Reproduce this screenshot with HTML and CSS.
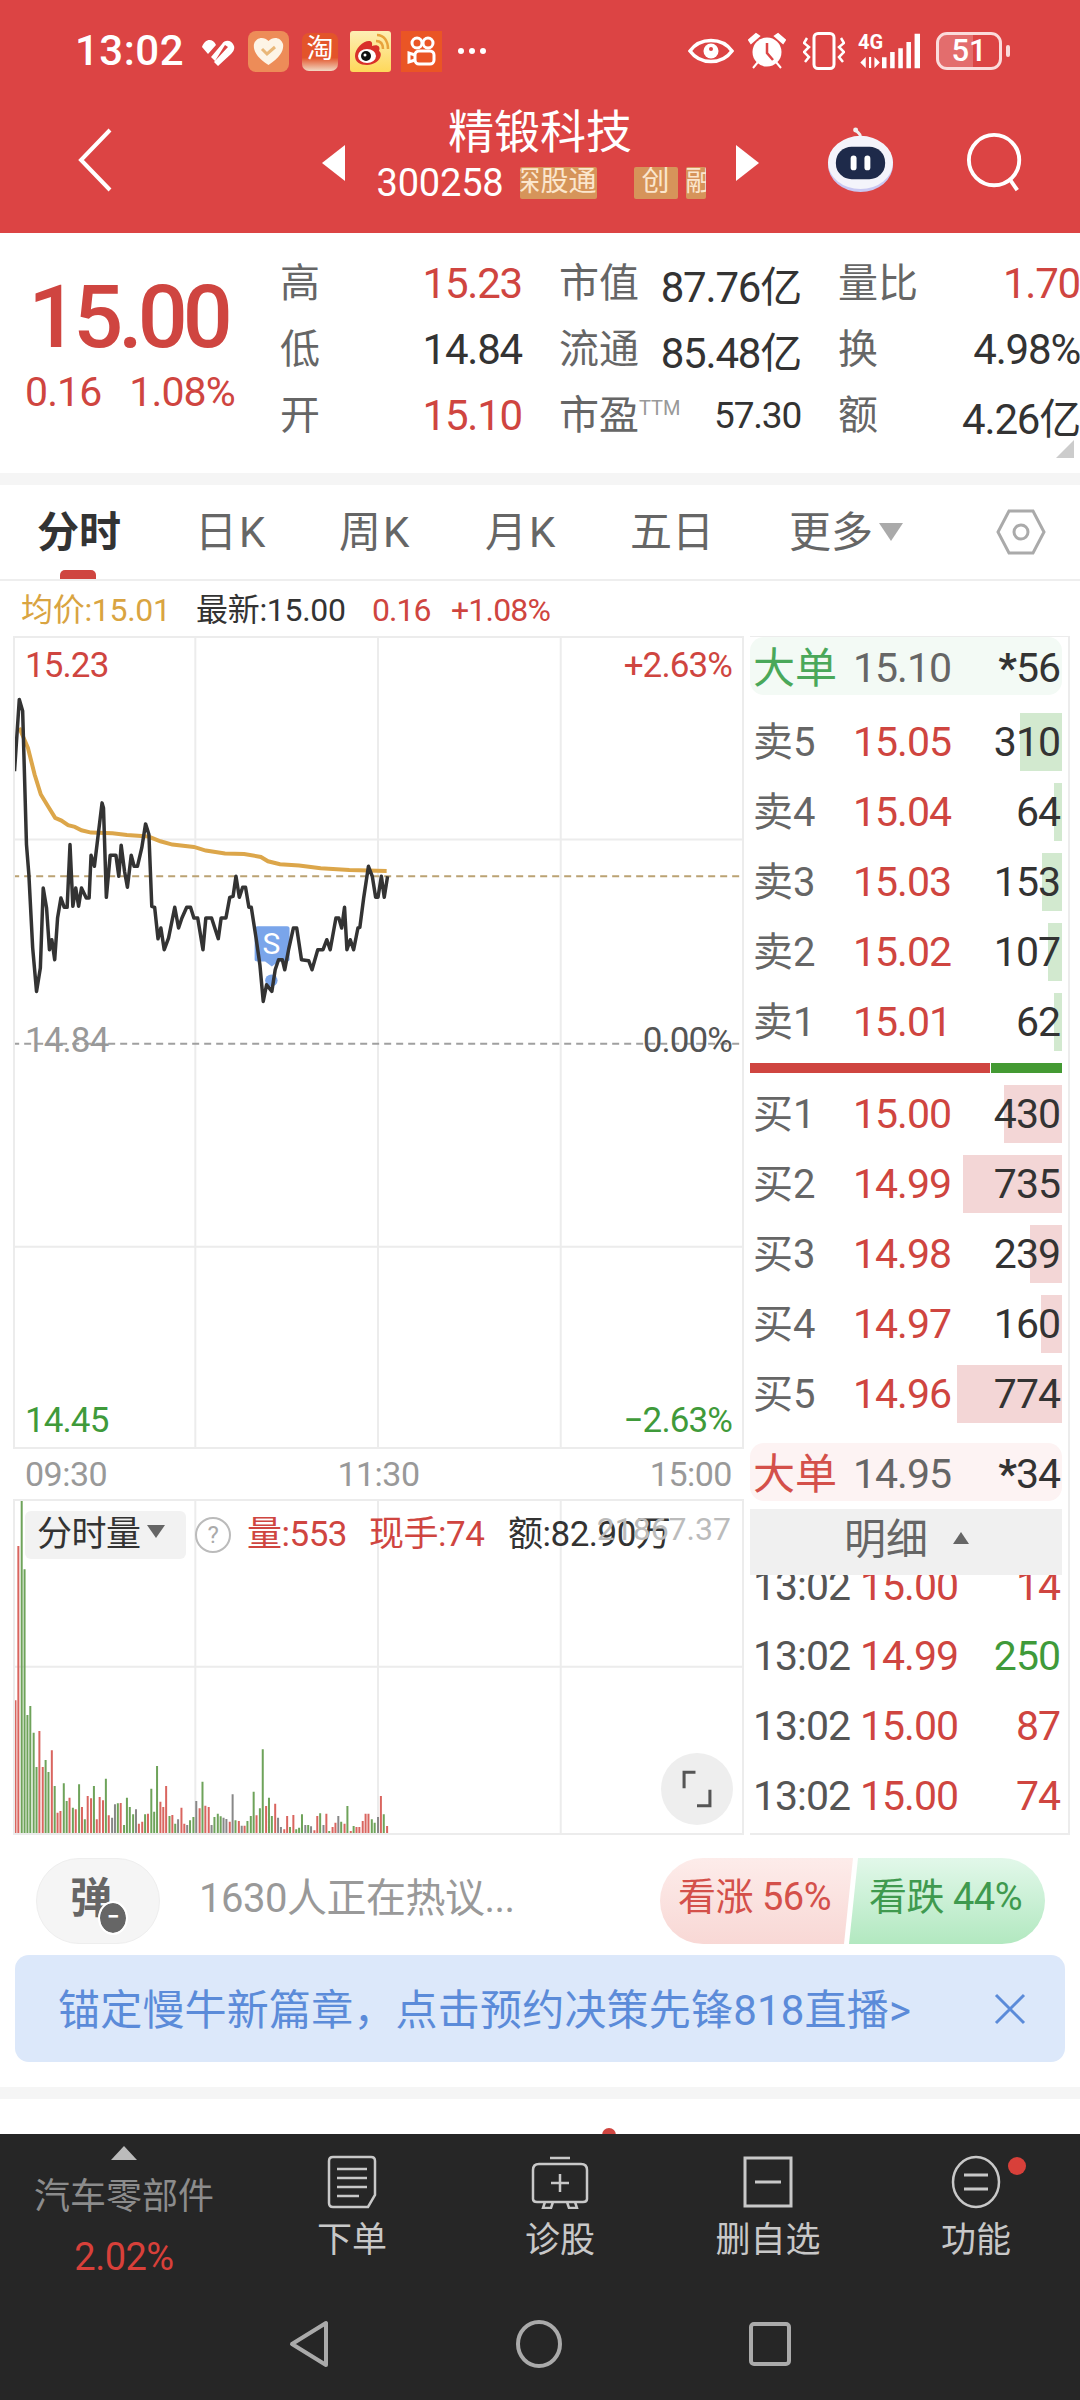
FILE: index.html
```html
<!DOCTYPE html>
<html lang="en">
<head>
  <meta charset="UTF-8">
  <title>精锻科技</title>
  <link rel="stylesheet" href="styles.css">
</head>
<body>
<header class="top">
  <div class="status">
    <span class="clock">13:02</span>
    <svg class="ic-pulse" viewBox="0 0 36 30"><path d="M2 10 C5 1 13 1 16 8 L8 17 Z M11 20 L22 7 C25 2 32 3 34 9 C35 12 33 15 31 17 L18 29 L14 25 L28 10 L25 8 L15 24 Z" fill="#fff"/></svg>
    <svg class="ic-app" viewBox="0 0 41 41"><rect width="41" height="41" rx="8" fill="#ed8c58"/><path d="M20.500 34 C8 26 5 19 6 13 C8 6 16 5 20.500 10 C25 5 33 6 35 13 C36 19 33 26 20.500 34Z" fill="#fdf4e6"/><path d="M14 18 L19 23 L27 16" fill="none" stroke="#e9b778" stroke-width="3"/></svg>
    <span class="ic-taobao">淘</span>
    <svg class="ic-app ic-weibo" viewBox="0 0 41 41"><defs><linearGradient id="wb" x1="0" y1="0" x2="0" y2="1"><stop offset="0" stop-color="#fdeeb5"/><stop offset="1" stop-color="#fed85a"/></linearGradient></defs><rect width="41" height="41" rx="3" fill="url(#wb)"/><path d="M5 25 C5 17 14 9 20 10 C23 11 22 14 22 15 C27 13 31 15 29 20 C33 22 31 33 17 34 C10 34 5 31 5 25Z" fill="#d9302a"/><ellipse cx="17" cy="25" rx="9" ry="7" fill="#fff"/><circle cx="16" cy="25" r="5" fill="#111"/><circle cx="15" cy="24" r="1.500" fill="#fff"/><path d="M26 10 C31 10 33 13 33 18 M27 4 C34 4 38 10 38 18" fill="none" stroke="#e8a23c" stroke-width="2.500"/></svg>
    <svg class="ic-app ic-kuai" viewBox="0 0 41 41"><rect width="41" height="41" fill="#ea5525"/><g fill="none" stroke="#fff" stroke-width="3"><circle cx="16" cy="12" r="5"/><circle cx="27" cy="12" r="5"/><rect x="14" y="20" width="19" height="13" rx="4"/><path d="M14 24 L8 22 V31 L14 29"/></g></svg>
    <span class="dots"><i></i><i></i><i></i></span>
    <span class="status-right">
      <svg class="ic-eye" viewBox="0 0 46 30"><path d="M2 15 C12 1 34 1 44 15 C34 29 12 29 2 15Z" fill="none" stroke="#fff" stroke-width="3.500"/><circle cx="23" cy="15" r="7.500" fill="#fff"/><circle cx="23" cy="13" r="2" fill="#dc4444"/></svg>
      <svg class="ic-alarm" viewBox="0 0 38 38"><circle cx="19" cy="20" r="14.500" fill="#fff"/><path d="M19 11 V21 L25 28" fill="none" stroke="#dc4444" stroke-width="2.500"/><path d="M1 8 L8 2 L11 4 L3 11Z M37 8 L30 2 L27 4 L35 11Z M5 36 L10 30 M33 36 L28 30" fill="#fff" stroke="#fff" stroke-width="2"/></svg>
      <svg class="ic-vib" viewBox="0 0 42 38"><rect x="11" y="1.500" width="20" height="35" rx="4" fill="none" stroke="#fff" stroke-width="3"/><path d="M4 6 L1 11 L6 15 L1 20 L6 25 L2 30 M38 6 L41 11 L36 15 L41 20 L36 25 L40 30" fill="none" stroke="#fff" stroke-width="2.500"/></svg>
      <span class="sig">
        <span class="sig-4g">4G<svg viewBox="0 0 20 12"><path d="M2 6 L7 1 V11 Z M10 1 H12 V11 H10 Z M15 1 L20 6 L15 11 Z" fill="#fff"/></svg></span>
        <svg class="sig-bars" viewBox="0 0 42 38"><path d="M0 26 H5 V38 H0Z M9 20 H14 V38 H9Z M18 16 H23 V38 H18Z M27 9 H32 V38 H27Z M36 0 H42 V38 H36Z" fill="#fff"/></svg>
      </span>
      <span class="batt"><span class="batt-level"></span><span class="batt-num">51</span></span><span class="batt-tip"></span>
    </span>
  </div>
  <div class="nav">
    <svg class="ic-back" viewBox="0 0 36 64"><path d="M33 2 L4 32 L33 62" fill="none" stroke="#fff" stroke-width="4"/></svg>
    <div class="stock">
      <span class="tri-left"></span>
      <div class="stock-name">
        <div class="stock-title">精锻科技</div>
        <div class="stock-sub">
          <span class="code">300258</span>
          <span class="tag tag-clip-l"><b>深股通</b></span>
          <span class="tag tag-chuang">创</span>
          <span class="tag tag-clip-r"><b>融</b></span>
        </div>
      </div>
      <span class="tri-right"></span>
    </div>
    <svg class="ic-robot" viewBox="0 0 72 66"><path d="M36 10 C36 6 32 6 31 2" fill="none" stroke="#f0f0f0" stroke-width="3"/><circle cx="31" cy="3" r="2.500" fill="#f0f0f0"/><ellipse cx="36" cy="38" rx="33" ry="28" fill="#c9c8f2"/><ellipse cx="36" cy="36" rx="33" ry="27" fill="#f4f4fb"/><rect x="11" y="20" width="50" height="33" rx="16" fill="#1e2a4a"/><rect x="26" y="29" width="6" height="15" rx="3" fill="#fff"/><rect x="40" y="29" width="6" height="15" rx="3" fill="#fff"/></svg>
    <svg class="ic-search" viewBox="0 0 62 62"><circle cx="29" cy="29" r="26" fill="none" stroke="#fff" stroke-width="4"/><path d="M46 50 L53 60" stroke="#fff" stroke-width="4"/></svg>
  </div>
</header>

<section class="quote">
  <div class="quote-main">
    <div class="price">15.00</div>
    <div class="change"><span>0.16</span><span>1.08%</span></div>
  </div>
  <div class="quote-grid">
    <div class="cell"><span>高</span><b class="red">15.23</b></div>
    <div class="cell"><span>市值</span><b>87.76亿</b></div>
    <div class="cell"><span>量比</span><b class="red">1.70</b></div>
    <div class="cell"><span>低</span><b>14.84</b></div>
    <div class="cell"><span>流通</span><b>85.48亿</b></div>
    <div class="cell"><span>换</span><b>4.98%</b></div>
    <div class="cell"><span>开</span><b class="red">15.10</b></div>
    <div class="cell"><span>市盈<sup>TTM</sup></span><b class="small">57.30</b></div>
    <div class="cell"><span>额</span><b>4.26亿</b></div>
  </div>
  <span class="corner"></span>
</section>
<div class="strip"></div>

<nav class="tabs">
  <a class="tab active">分时</a>
  <a class="tab t2">日K</a>
  <a class="tab t3">周K</a>
  <a class="tab t4">月K</a>
  <a class="tab t5">五日</a>
  <a class="tab t6">更多<i class="down"></i></a>
  <svg class="ic-hex" viewBox="0 0 50 46"><path d="M13 2 H37 L48 23 L37 44 H13 L2 23Z" fill="none" stroke="#aaa" stroke-width="3"/><circle cx="25" cy="23" r="7" fill="none" stroke="#aaa" stroke-width="3"/></svg>
</nav>

<div class="legend">
  <span class="gold">均价:15.01</span>
  <span class="l2">最新:15.00</span>
  <span class="red l3">0.16</span>
  <span class="red l4">+1.08%</span>
</div>

<main class="market">
  <div class="charts">
    <div class="price-chart">
      <svg viewBox="31 21 1520 2424" preserveAspectRatio="none">
        <g class="grid">
          <path d="M408 0 V2500 M790 0 V2500 M1172 0 V2500 M0 625 H1600 M0 1845 H1600"/>
        </g>
        <path class="dash-gold" d="M0 735 H1600"/>
        <path class="dash-gray" d="M0 1237 H1600"/>
        <path class="avg" d="M40 290 L58 350 L72 430 L85 490 L100 525 L115 560 L128 568 L142 582 L156 587 L170 597 L190 604 L235 606 L265 611 L310 616 L335 630 L360 640 L405 647 L430 658 L470 667 L510 668 L545 677 L560 690 L585 699 L625 703 L670 711 L730 716 L808 719"/>
        <path class="marker" d="M538 885 H600 Q605 885 605 890 V985 Q605 990 600 990 H582 L568 1005 L554 990 H538 Q532 990 532 985 V890 Q532 885 538 885Z"/>
        <ellipse class="marker" cx="567" cy="1047" rx="13" ry="18"/>
        <path class="line" d="M30 420 L40 205 L47 240 L55 640 L60 730 L68 950 L76 1080 L84 1010 L90 770 L97 830 L103 955 L108 925 L114 985 L120 860 L127 800 L134 828 L140 828 L146 640 L152 825 L158 770 L164 825 L170 770 L180 800 L186 800 L190 672 L197 705 L205 610 L213 515 L216 530 L222 798 L230 672 L242 672 L248 735 L253 642 L260 720 L266 768 L274 672 L280 705 L287 705 L296 650 L304 578 L311 610 L317 825 L323 828 L330 922 L336 890 L343 955 L352 920 L365 828 L373 890 L380 860 L390 828 L398 828 L405 860 L413 860 L424 955 L430 860 L442 860 L456 922 L462 860 L472 860 L480 798 L487 795 L493 735 L500 798 L507 768 L513 768 L520 828 L525 828 L535 920 L543 1000 L550 1110 L557 1060 L568 1080 L575 1015 L582 985 L590 985 L595 1015 L603 955 L613 890 L620 890 L630 985 L645 988 L652 1015 L664 955 L675 955 L683 925 L690 955 L702 860 L708 860 L714 890 L720 828 L725 955 L732 925 L739 955 L748 890 L752 888 L760 800 L770 705 L778 735 L785 798 L790 798 L797 735 L803 798 L810 735"/>
      </svg>
      <span class="mark-s">S</span>
      <span class="ax ax-tl red">15.23</span>
      <span class="ax ax-tr red">+2.63%</span>
      <span class="ax ax-ml">14.84</span>
      <span class="ax ax-mr">0.00%</span>
      <span class="ax ax-bl green">14.45</span>
      <span class="ax ax-br green">−2.63%</span>
    </div>
    <div class="times"><span>09:30</span><span>11:30</span><span>15:00</span></div>
    <div class="vol-chart">
      <svg viewBox="31 300 1520 996" preserveAspectRatio="none">
        <g class="grid">
          <path d="M408 0 V1400 M790 0 V1400 M1172 0 V1400 M0 797 H1600"/>
        </g>
        <path class="bar-r" d="M32 898V1300M38 435V1300M82 990V1300M89 1098V1300M108 1048V1300M120 1235V1300M126 1230V1300M145 1190V1300M158 1225V1300M171 1218V1300M183 1185V1300M190 1192V1300M202 1255V1300M208 1188V1300M215 1198V1300M227 1243V1300M252 1206V1300M290 1268V1300M297 1262V1300M309 1238V1300M335 1202V1300M341 1218V1300M347 1155V1300M360 1242V1300M379 1220V1300M385 1268V1300M417 1222V1300M429 1214V1300M436 1218V1300M480 1262V1300M499 1260V1300M511 1274V1300M536 1243V1300M556 1215V1300M575 1208V1300M594 1285V1300M600 1245V1300M613 1242V1300M657 1288V1300M663 1245V1300M682 1238V1300M695 1278V1300M701 1265V1300M720 1268V1300M733 1290V1300M745 1278V1300M751 1278V1300M758 1260V1300M764 1238V1300M770 1238V1300M796 1185V1300M809 1275V1300"/>
        <path class="bar-g" d="M45 295V1300M51 505V1300M57 942V1300M63 915V1300M70 995V1300M76 1098V1300M95 1077V1300M101 1113V1300M114 1155V1300M133 1147V1300M139 1200V1300M152 1220V1300M165 1150V1300M177 1255V1300M196 1155V1300M221 1133V1300M246 1207V1300M259 1272V1300M265 1190V1300M271 1218V1300M278 1240V1300M303 1240V1300M316 1163V1300M322 1232V1300M328 1095V1300M354 1245V1300M366 1268V1300M397 1258V1300M404 1248V1300M423 1142V1300M448 1248V1300M455 1238V1300M461 1246V1300M492 1258V1300M517 1260V1300M524 1245V1300M530 1172V1300M543 1222V1300M549 1045V1300M562 1190V1300M568 1245V1300M606 1278V1300M619 1285V1300M625 1280V1300M631 1240V1300M644 1272V1300M669 1237V1300M688 1290V1300M713 1262V1300M726 1215V1300M739 1275V1300M777 1255V1300M783 1265V1300M802 1240V1300"/>
        <path class="bar-n" d="M234 1250V1300M240 1210V1300M284 1225V1300M372 1255V1300M391 1272V1300M410 1200V1300M442 1272V1300M467 1250V1300M473 1254V1300M486 1180V1300M505 1274V1300M581 1250V1300M587 1278V1300M638 1272V1300M650 1276V1300M676 1272V1300M707 1245V1300M790 1248V1300"/>
      </svg>
      <div class="vol-head">
        <span class="vol-chip">分时量<i class="down dark"></i></span>
        <span class="help">?</span>
        <span class="red v1">量:553</span>
        <span class="red v2">现手:74</span>
        <span class="v3">额:82.90万</span>
      </div>
      <span class="vol-max">21867.37</span>
      <span class="fullscreen">
        <svg viewBox="0 0 40 50"><path d="M18 3 H3 V24 M37 26 V47 H20" fill="none" stroke="#555" stroke-width="4"/></svg>
      </span>
    </div>
  </div>

  <aside class="book">
    <div class="big big-buy"><span class="lab">大单</span><span class="gray">15.10</span><span class="qty"><em>*</em>56</span></div>
    <div class="asks">
      <div class="row"><i class="vol vol-g" style="width:42px"></i><span class="lab">卖5</span><span class="red">15.05</span><span class="qty">310</span></div>
      <div class="row"><i class="vol vol-g" style="width:8px"></i><span class="lab">卖4</span><span class="red">15.04</span><span class="qty">64</span></div>
      <div class="row"><i class="vol vol-g" style="width:20px"></i><span class="lab">卖3</span><span class="red">15.03</span><span class="qty">153</span></div>
      <div class="row"><i class="vol vol-g" style="width:14px"></i><span class="lab">卖2</span><span class="red">15.02</span><span class="qty">107</span></div>
      <div class="row"><i class="vol vol-g" style="width:8px"></i><span class="lab">卖1</span><span class="red">15.01</span><span class="qty">62</span></div>
    </div>
    <div class="ratio"><i class="ratio-r"></i><i class="ratio-g"></i></div>
    <div class="bids">
      <div class="row"><i class="vol vol-r" style="width:58px"></i><span class="lab">买1</span><span class="red">15.00</span><span class="qty">430</span></div>
      <div class="row"><i class="vol vol-r" style="width:99px"></i><span class="lab">买2</span><span class="red">14.99</span><span class="qty">735</span></div>
      <div class="row"><i class="vol vol-r" style="width:32px"></i><span class="lab">买3</span><span class="red">14.98</span><span class="qty">239</span></div>
      <div class="row"><i class="vol vol-r" style="width:21px"></i><span class="lab">买4</span><span class="red">14.97</span><span class="qty">160</span></div>
      <div class="row"><i class="vol vol-r" style="width:105px"></i><span class="lab">买5</span><span class="red">14.96</span><span class="qty">774</span></div>
    </div>
    <div class="big big-sell"><span class="lab">大单</span><span class="gray">14.95</span><span class="qty"><em>*</em>34</span></div>
    <div class="detail-head">明细<i class="up"></i></div>
    <div class="ticks">
      <div class="tick"><span>13:02</span><span class="red">15.00</span><span class="red qty">14</span></div>
      <div class="tick"><span>13:02</span><span class="red">14.99</span><span class="green qty">250</span></div>
      <div class="tick"><span>13:02</span><span class="red">15.00</span><span class="red qty">87</span></div>
      <div class="tick"><span>13:02</span><span class="red">15.00</span><span class="red qty">74</span></div>
    </div>
  </aside>
</main>

<div class="talk">
  <span class="danmu">弹<i>−</i></span>
  <span class="talk-text">1630人正在热议...</span>
  <div class="vote">
    <span class="vote-up">看涨 56%</span>
    <span class="vote-down">看跌 44%</span>
  </div>
</div>

<div class="notice">
  <span>锚定慢牛新篇章，点击预约决策先锋818直播&gt;</span>
  <svg viewBox="0 0 32 32"><path d="M2 2 L30 30 M30 2 L2 30" stroke="#5b8bd9" stroke-width="3"/></svg>
</div>

<div class="strip strip-low"></div>
<div class="gap"><i class="gap-dot"></i></div>

<footer class="dock">
  <div class="dock-top">
    <div class="sector">
      <i class="sector-tri"></i>
      <div class="sector-name">汽车零部件</div>
      <div class="sector-pct">2.02%</div>
    </div>
    <div class="act">
      <svg viewBox="0 0 50 54"><path d="M6 2 H44 Q48 2 48 6 V40 L41 52 H6 Q2 52 2 48 V6 Q2 2 6 2Z M10 14 H40 M10 23 H40 M10 32 H40 M10 41 H32" fill="none" stroke="#c8c8c8" stroke-width="2.500"/></svg>
      <span>下单</span>
    </div>
    <div class="act">
      <svg viewBox="0 0 58 54"><path d="M19 3 H39 M8 9 H50 Q56 9 56 15 V44 Q56 47 52 47 H6 Q2 47 2 44 V15 Q2 9 8 9Z M29 19 V37 M20 28 H38 M14 47 L12 53 H20 L22 47 M36 47 L38 53 H46 L44 47" fill="none" stroke="#c8c8c8" stroke-width="2.500"/></svg>
      <span>诊股</span>
    </div>
    <div class="act">
      <svg viewBox="0 0 50 54"><rect x="2" y="3" width="46" height="48" fill="none" stroke="#c8c8c8" stroke-width="3"/><path d="M12 27 H38" stroke="#c8c8c8" stroke-width="3"/></svg>
      <span>删自选</span>
    </div>
    <div class="act act-dot">
      <svg viewBox="0 0 50 54"><ellipse cx="25" cy="27" rx="23" ry="25" fill="none" stroke="#c8c8c8" stroke-width="2.500"/><path d="M13 20 H37 M13 34 H37" stroke="#c8c8c8" stroke-width="3"/></svg>
      <span>功能</span>
      <i class="red-dot"></i>
    </div>
  </div>
  <div class="sysnav">
    <svg class="sn-back" viewBox="0 0 40 48"><path d="M37 3 V45 L3 24Z" fill="none" stroke="#aaa" stroke-width="4" stroke-linejoin="round"/></svg>
    <svg class="sn-home" viewBox="0 0 46 48"><ellipse cx="23" cy="24" rx="21" ry="22" fill="none" stroke="#aaa" stroke-width="4"/></svg>
    <svg class="sn-recent" viewBox="0 0 42 44"><rect x="2" y="2" width="38" height="40" rx="3" fill="none" stroke="#aaa" stroke-width="4"/></svg>
  </div>
</footer>
</body>
</html>
```

FILE: styles.css
```css
* {
  box-sizing: border-box;
}
body {
  margin: 0;
  width: 1080px;
  height: 2400px;
  overflow: hidden;
  background: #fff;
  color: #333;
  font-family: Roboto, "Noto Sans CJK SC", sans-serif;
}
i {
  font-style: normal;
}
svg {
  display: block;
}
.red { color: #cf4540; }
.green { color: #3f9a3a; }
.gold { color: #d9a441; }
.gray { color: #666; }

/* header */
.top {
  height: 233px;
  background: #dc4444;
  color: #fff;
}
.status {
  height: 100px;
  padding: 30px 0 0 75px;
  display: flex;
  align-items: flex-start;
  position: relative;
}
.clock {
  width: 111px;
  font-size: 42px;
  line-height: 42px;
  font-weight: 500;
  letter-spacing: 0.5px;
}
.ic-pulse {
  width: 36px;
  height: 30px;
  margin: 7px 0 0 14px;
}
.ic-app {
  width: 41px;
  height: 41px;
  margin: 1px 0 0 12px;
}
.ic-taobao {
  width: 36px;
  height: 38px;
  margin: 3px 0 0 13px;
  border-radius: 7px;
  background: linear-gradient(#e3542a 65%, #f1d9c3);
  font-size: 27px;
  line-height: 32px;
  text-align: center;
}
.ic-weibo { margin-left: 12px; }
.ic-kuai { margin-left: 10px; }
.dots {
  display: flex;
  gap: 5px;
  margin: 18px 0 0 16px;
}
.dots i {
  width: 6px;
  height: 6px;
  border-radius: 50%;
  background: #fff;
}
.status-right {
  margin-left: 202px;
  display: flex;
  align-items: center;
  height: 42px;
}
.ic-eye { width: 46px; height: 30px; }
.ic-alarm { width: 38px; height: 38px; margin-left: 14px; }
.ic-vib { width: 42px; height: 38px; margin-left: 17px; }
.sig {
  display: flex;
  margin-left: 13px;
  width: 62px;
  height: 38px;
}
.sig-4g {
  width: 24px;
  font-size: 20px;
  line-height: 20px;
  font-weight: 700;
}
.sig-4g svg {
  width: 22px;
  height: 13px;
  margin-top: 4px;
}
.sig-bars {
  width: 38px;
  height: 38px;
}
.batt {
  position: relative;
  width: 66px;
  height: 38px;
  margin-left: 16px;
  border: 3px solid #fbdcdc;
  border-radius: 11px;
  overflow: hidden;
  text-align: center;
  font-size: 31px;
  line-height: 32px;
  font-weight: 500;
}
.batt-level {
  position: absolute;
  left: 0;
  top: 0;
  bottom: 0;
  width: 34px;
  background: rgba(255, 255, 255, 0.22);
}
.batt-num { position: relative; }
.batt-tip {
  width: 4px;
  height: 12px;
  margin-left: 4px;
  border-radius: 2px;
  background: #fbdcdc;
}
.nav {
  height: 133px;
  position: relative;
  display: flex;
}
.ic-back {
  position: absolute;
  left: 77px;
  top: 28px;
  width: 36px;
  height: 64px;
}
.stock {
  width: 100%;
  display: flex;
  justify-content: center;
}
.tri-left, .tri-right {
  width: 0;
  height: 0;
  margin-top: 45px;
  border-top: 18px solid transparent;
  border-bottom: 18px solid transparent;
}
.tri-left { border-right: 23px solid #fff; }
.tri-right { border-left: 23px solid #fff; }
.stock-name {
  width: 391px;
  text-align: center;
}
.stock-title {
  font-size: 46px;
  line-height: 62px;
  margin-top: 1px;
}
.stock-sub {
  display: flex;
  align-items: center;
  margin: 4px 0 0 32px;
}
.code {
  width: 143px;
  text-align: left;
  font-size: 38px;
  line-height: 32px;
  letter-spacing: -0.2px;
}
.tag {
  display: flex;
  height: 32px;
  overflow: hidden;
  background: #d6945a;
  color: #fbe6cd;
  font-size: 28px;
  line-height: 30px;
  border-radius: 2px;
}
.tag b { font-weight: 400; flex: none; }
.tag-clip-l { width: 77px; justify-content: flex-end; }
.tag-chuang { width: 44px; margin-left: 37px; justify-content: center; }
.tag-clip-r { width: 20px; margin-left: 8px; }
.ic-robot {
  position: absolute;
  left: 825px;
  top: 27px;
  width: 71px;
  height: 65px;
}
.ic-search {
  position: absolute;
  left: 966px;
  top: 32px;
  width: 60px;
  height: 60px;
}

/* quote */
.quote {
  height: 240px;
  position: relative;
  display: flex;
}
.quote-main {
  width: 280px;
  text-align: center;
}
.quote-main .price {
  margin: 34px 0 0 -24px;
  font-size: 88px;
  line-height: 100px;
  font-weight: 500;
  letter-spacing: -5px;
  color: #cf4540;
}
.change {
  display: flex;
  gap: 28px;
  margin: 0 0 0 25px;
  font-size: 41px;
  line-height: 50px;
  letter-spacing: -0.9px;
  color: #cf4540;
}
.quote-grid {
  width: 800px;
  padding-top: 17px;
  display: grid;
  grid-template-columns: 242px 242px 242px;
  grid-auto-rows: 66px;
  column-gap: 37px;
}
.cell {
  display: flex;
  justify-content: space-between;
  align-items: center;
  font-size: 40px;
  color: #666;
}
.cell span {
  position: relative;
  top: -3px;
}
.cell b {
  font-weight: 400;
  font-size: 42px;
  letter-spacing: -1.2px;
  color: #333;
}
.cell b.red { color: #cf4540; }
.cell b.small { font-size: 37px; }
.cell sup {
  font-size: 20px;
  vertical-align: 14px;
  line-height: 0;
  color: #999;
}
.corner {
  position: absolute;
  right: 6px;
  bottom: 15px;
  width: 0;
  height: 0;
  border-left: 18px solid transparent;
  border-bottom: 18px solid #ccc;
}
.strip {
  height: 12px;
  background: #f5f5f5;
}

/* tabs */
.tabs {
  height: 96px;
  position: relative;
  border-bottom: 2px solid #eee;
  font-size: 42px;
  color: #666;
}
.tab {
  position: absolute;
  top: 24px;
  line-height: 48px;
}
.tab.active {
  left: 37px;
  font-weight: 700;
  color: #333;
}
.tab.active::after {
  content: "";
  position: absolute;
  left: 23px;
  top: 61px;
  width: 36px;
  height: 9px;
  border-radius: 5px 5px 0 0;
  background: #cf4540;
}
.t2, .t3, .t4 { letter-spacing: 2px; }
.t2 { left: 195px; }
.t3 { left: 339px; }
.t4 { left: 485px; }
.t5 { left: 630px; }
.t6 { left: 789px; }
.down {
  display: inline-block;
  width: 0;
  height: 0;
  margin-left: 6px;
  vertical-align: 6px;
  border-left: 12px solid transparent;
  border-right: 12px solid transparent;
  border-top: 18px solid #aaa;
}
.ic-hex {
  position: absolute;
  left: 996px;
  top: 24px;
  width: 50px;
  height: 46px;
}

/* legend */
.legend {
  height: 55px;
  position: relative;
  font-size: 32px;
  line-height: 58px;
  letter-spacing: -0.3px;
}
.legend span { position: absolute; }
.legend .gold { left: 21px; }
.l2 { left: 196px; }
.l3 { left: 372px; letter-spacing: -1px; }
.l4 { left: 451px; letter-spacing: -0.8px; }

/* main area */
.market {
  display: flex;
  height: 1199px;
}
.charts {
  width: 731px;
  margin-left: 13px;
}
.grid path {
  fill: none;
  stroke: #ececec;
  stroke-width: 2;
  vector-effect: non-scaling-stroke;
}
.price-chart {
  position: relative;
  height: 813px;
  border: 2px solid #ececec;
}
.price-chart svg, .vol-chart svg {
  width: 100%;
  height: 100%;
}
.dash-gold, .dash-gray, .avg, .line {
  fill: none;
  vector-effect: non-scaling-stroke;
}
.dash-gold {
  stroke: #bba273;
  stroke-width: 2;
  stroke-dasharray: 7 5;
}
.dash-gray {
  stroke: #a0a0a0;
  stroke-width: 2;
  stroke-dasharray: 7 5;
}
.avg {
  stroke: #dca64a;
  stroke-width: 4;
}
.line {
  stroke: #333;
  stroke-width: 3.5;
  stroke-linejoin: round;
}
.marker {
  fill: #7aa5ea;
}
.mark-s {
  position: absolute;
  left: 239px;
  top: 288px;
  width: 35px;
  text-align: center;
  font-size: 30px;
  line-height: 36px;
  color: #fff;
}
.ax {
  position: absolute;
  font-size: 35px;
  line-height: 40px;
  letter-spacing: -0.9px;
}
.ax-tl { left: 10px; top: 8px; }
.ax-tr { right: 10px; top: 8px; }
.ax-ml { left: 10px; top: 383px; color: #999; }
.ax-mr { right: 10px; top: 383px; color: #555; }
.ax-bl { left: 10px; top: 763px; }
.ax-br { right: 10px; top: 763px; }
.times {
  height: 50px;
  padding: 0 12px;
  display: flex;
  justify-content: space-between;
  font-size: 34px;
  line-height: 50px;
  letter-spacing: -0.5px;
  color: #999;
}
.vol-chart {
  position: relative;
  height: 336px;
  border: 2px solid #ececec;
  border-right-width: 2px;
}
.bar-r, .bar-g, .bar-n {
  fill: none;
  stroke-width: 2;
  vector-effect: non-scaling-stroke;
}
.bar-r { stroke: #d9655f; }
.bar-g { stroke: #6ea35a; }
.bar-n { stroke: #888; }
.vol-head {
  position: absolute;
  left: 0;
  top: 10px;
  width: 100%;
  height: 48px;
  font-size: 35px;
  line-height: 48px;
  letter-spacing: -0.5px;
}
.vol-head > span { position: absolute; top: 0; }
.vol-chip {
  left: 10px;
  width: 161px;
  height: 48px;
  padding-left: 12px;
  background: #f2f2f2;
  border-radius: 6px;
  font-size: 35px;
}
.down.dark {
  border-left-width: 9px;
  border-right-width: 9px;
  border-top: 13px solid #666;
  margin-left: 6px;
  vertical-align: 8px;
}
.help {
  left: 180px;
  top: 6px !important;
  width: 36px;
  height: 36px;
  border: 2px solid #bbb;
  border-radius: 50%;
  font-size: 24px;
  line-height: 32px;
  text-align: center;
  color: #aaa;
}
.v1 { left: 232px; }
.v2 { left: 354px; }
.v3 { left: 493px; }
.vol-max {
  position: absolute;
  right: 11px;
  top: 8px;
  font-size: 32px;
  line-height: 40px;
  color: #bbb;
}
.fullscreen {
  position: absolute;
  right: 9px;
  bottom: 8px;
  width: 72px;
  height: 72px;
  padding: 17px 20px;
  border-radius: 50%;
  background: #eee;
}
.fullscreen svg {
  width: 32px;
  height: 38px;
}

/* order book */
.book {
  width: 320px;
  margin-left: 6px;
  padding-right: 6px;
  border-right: 2px solid #ececec;
  border-top: 1px solid #ececec;
  border-bottom: 2px solid #ececec;
  font-size: 41px;
  letter-spacing: -1px;
  overflow: hidden;
}
.big, .row, .tick {
  display: grid;
  grid-template-columns: 100px 100px 1fr;
  align-items: center;
  position: relative;
  padding: 0 2px 0 3px;
}
.qty {
  text-align: right;
  color: #333;
  position: relative;
}
.qty.red { color: #cf4540; }
.qty.green { color: #3f9a3a; }
.qty em {
  font-style: normal;
  font-weight: 700;
}
.big {
  height: 58px;
  border-radius: 14px;
}
.big-buy { background: #f3faf5; }
.big-sell { background: #fdf3f3; margin-top: 20px; }
.big .lab { font-size: 42px; letter-spacing: 0; }
.big-buy .lab { color: #4aa85a; }
.big-sell .lab { color: #d4504a; }
.lab {
  color: #666;
  font-size: 40px;
  letter-spacing: 0;
  position: relative;
  top: -3px;
}
.asks { padding-top: 18px; }
.row {
  height: 58px;
  margin-bottom: 12px;
}
.row span { position: relative; }
.vol {
  position: absolute;
  right: 0;
  top: 0;
  bottom: 0;
}
.vol-g { background: #d2e9cf; }
.vol-r { background: #f3d6d6; }
.ratio {
  display: flex;
  height: 10px;
  margin: 2px 0 12px;
}
.ratio-r { width: 240px; background: #cf4540; }
.ratio-g { flex: 1; background: #449a33; margin-left: 1px; }
.bids .row:last-child { margin-bottom: 0; }
.detail-head {
  position: relative;
  z-index: 1;
  height: 66px;
  margin-top: 8px;
  background: #f0f0f0;
  padding-left: 94px;
  font-size: 42px;
  line-height: 62px;
  letter-spacing: 0;
  color: #666;
}
.up {
  display: inline-block;
  width: 0;
  height: 0;
  margin-left: 25px;
  vertical-align: 10px;
  border-left: 8px solid transparent;
  border-right: 8px solid transparent;
  border-bottom: 12px solid #666;
}
.ticks { margin-top: -24px; }
.tick {
  height: 70px;
  grid-template-columns: 107px 100px 1fr;
  color: #555;
}

/* talk row */
.talk {
  height: 86px;
  margin-top: 23px;
  padding-left: 36px;
  display: flex;
  align-items: center;
}
.danmu {
  position: relative;
  width: 124px;
  height: 86px;
  padding-left: 33px;
  background: #f5f5f5;
  border: 1px solid #eee;
  border-radius: 43px;
  font-size: 42px;
  font-weight: 700;
  line-height: 80px;
  color: #666;
}
.danmu i {
  position: absolute;
  left: 63px;
  top: 44px;
  width: 26px;
  height: 30px;
  border-radius: 50%;
  outline: 2px solid #fff;
  background: #666;
  color: #fff;
  font-size: 22px;
  line-height: 28px;
  text-align: center;
}
.talk-text {
  margin-left: 39px;
  width: 461px;
  font-size: 40px;
  line-height: 50px;
  letter-spacing: -0.5px;
  margin-top: -4px;
  color: #999;
}
.vote {
  display: flex;
  width: 385px;
  height: 86px;
  font-size: 38px;
  letter-spacing: -0.5px;
}
.vote span {
  line-height: 78px;
}
.vote-up {
  width: 193px;
  padding-left: 18px;
  border-radius: 43px 0 0 43px;
  background: linear-gradient(#fdecea, #f8d8d5);
  color: #d4504a;
  clip-path: polygon(0 0, 100% 0, calc(100% - 9px) 100%, 0 100%);
}
.vote-down {
  width: 196px;
  margin-left: -4px;
  padding-left: 20px;
  border-radius: 0 43px 43px 0;
  background: linear-gradient(#e2f8ea, #b2e8c0);
  color: #3f9a4f;
  clip-path: polygon(9px 0, 100% 0, 100% 100%, 0 100%);
}

/* notice */
.notice {
  height: 107px;
  margin: 11px 15px 0;
  padding: 0 39px 0 43px;
  display: flex;
  justify-content: space-between;
  align-items: center;
  background: #dce8fa;
  border-radius: 14px;
  font-size: 42px;
  letter-spacing: 0.2px;
  color: #5b8bd9;
}
.notice span {
  position: relative;
  top: -2px;
}
.notice svg {
  width: 32px;
  height: 32px;
}
.strip-low { margin-top: 25px; }
.gap {
  height: 35px;
  position: relative;
}
.gap-dot {
  position: absolute;
  left: 602px;
  bottom: -8px;
  width: 14px;
  height: 14px;
  border-radius: 50%;
  background: #cf4540;
}

/* bottom dock */
.dock {
  position: relative;
  height: 267px;
  background: #262626;
}
.dock-top {
  height: 180px;
  display: flex;
}
.sector {
  width: 248px;
  text-align: center;
  padding-top: 12px;
}
.sector-tri {
  display: block;
  width: 0;
  height: 0;
  margin: 0 auto;
  border-left: 13px solid transparent;
  border-right: 13px solid transparent;
  border-bottom: 14px solid #bbb;
}
.sector-name {
  margin-top: 15px;
  font-size: 36px;
  line-height: 44px;
  color: #8c8c8c;
}
.sector-pct {
  margin-top: 16px;
  font-size: 38px;
  line-height: 44px;
  color: #d8403a;
  letter-spacing: -0.5px;
}
.act {
  position: relative;
  width: 208px;
  padding-top: 21px;
  display: flex;
  flex-direction: column;
  align-items: center;
  font-size: 35px;
  line-height: 40px;
  color: #c8c8c8;
}
.act svg {
  width: 50px;
  height: 54px;
  margin-bottom: 12px;
}
.act:nth-child(3) svg { width: 58px; }
.red-dot {
  position: absolute;
  left: 136px;
  top: 23px;
  width: 18px;
  height: 18px;
  border-radius: 50%;
  background: #d8403a;
}
.sysnav {
  display: flex;
  justify-content: center;
  align-items: center;
  gap: 187px;
  height: 46px;
  margin-top: 7px;
}
.sn-back { width: 40px; height: 48px; }
.sn-home { width: 46px; height: 48px; }
.sn-recent { width: 42px; height: 44px; }
```
